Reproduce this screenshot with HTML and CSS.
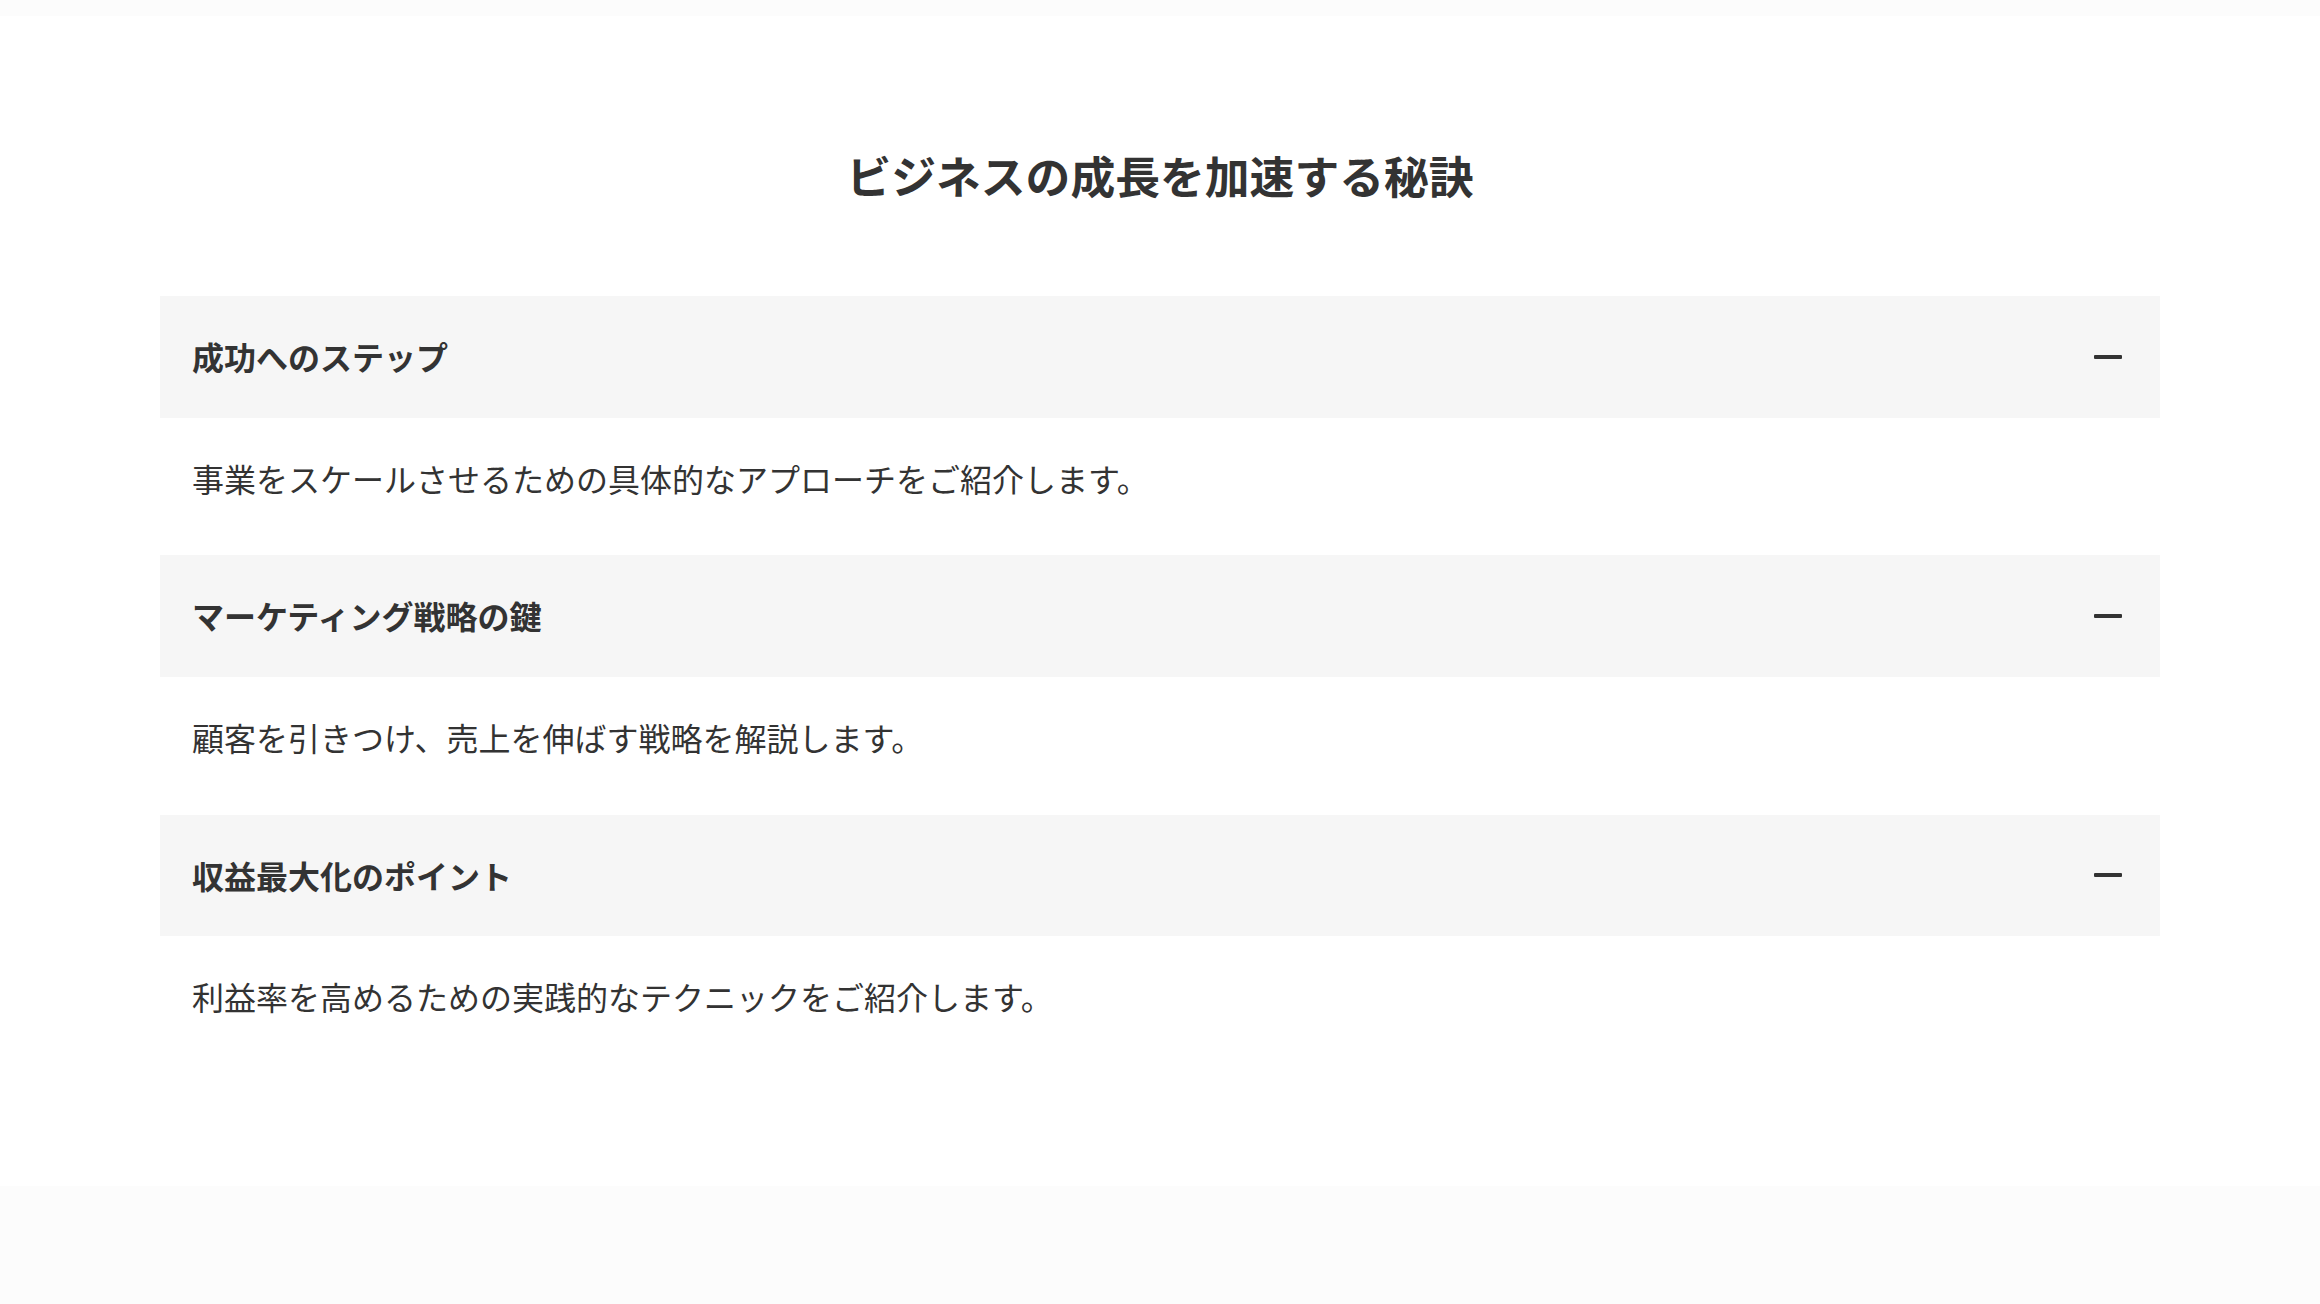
FILE: index.html
```html
<!DOCTYPE html>
<html lang="ja">
<head>
<meta charset="utf-8">
<title>ビジネスの成長を加速する秘訣</title>
<link rel="stylesheet" href="styles.css">
</head>
<body>
<main class="page">
  <section class="faq">
    <h2 class="faq-title">ビジネスの成長を加速する秘訣</h2>
    <div class="faq-list">
      <div class="faq-item">
        <div class="faq-head">
          <span class="faq-q">成功へのステップ</span>
          <span class="faq-toggle" aria-hidden="true"></span>
        </div>
        <div class="faq-body">事業をスケールさせるための具体的なアプローチをご紹介します。</div>
      </div>
      <div class="faq-item">
        <div class="faq-head">
          <span class="faq-q">マーケティング戦略の鍵</span>
          <span class="faq-toggle" aria-hidden="true"></span>
        </div>
        <div class="faq-body">顧客を引きつけ、売上を伸ばす戦略を解説します。</div>
      </div>
      <div class="faq-item">
        <div class="faq-head">
          <span class="faq-q">収益最大化のポイント</span>
          <span class="faq-toggle" aria-hidden="true"></span>
        </div>
        <div class="faq-body">利益率を高めるための実践的なテクニックをご紹介します。</div>
      </div>
    </div>
  </section>
</main>
</body>
</html>
```

FILE: styles.css
```css
* { box-sizing: border-box; }
html, body {
  margin: 0;
  padding: 0;
  background: #fcfcfc;
}
body {
  font-family: "Noto Sans CJK JP", "Noto Sans", sans-serif;
  color: #333333;
}
.page {
  padding-top: 16px;
}
.faq {
  background: #ffffff;
  padding: 125px 160px 128px;
}
.faq-title {
  margin: 0 0 88px;
  text-align: center;
  font-size: 44.8px;
  line-height: 1.5;
  font-weight: 700;
  color: #333333;
}
.faq-list {
  display: flex;
  flex-direction: column;
  gap: 16px;
}
.faq-head {
  display: flex;
  align-items: center;
  justify-content: space-between;
  background: #f6f6f6;
  padding: 32px 38px 32px 32px;
}
.faq-q {
  font-size: 32px;
  line-height: 1.8;
  font-weight: 700;
  color: #333333;
}
.faq-toggle {
  width: 28px;
  height: 4px;
  border-radius: 1px;
  background: #333333;
}
.faq-body {
  padding: 32px;
  font-size: 32px;
  line-height: 1.8;
  font-weight: 400;
  color: #333333;
}
```
